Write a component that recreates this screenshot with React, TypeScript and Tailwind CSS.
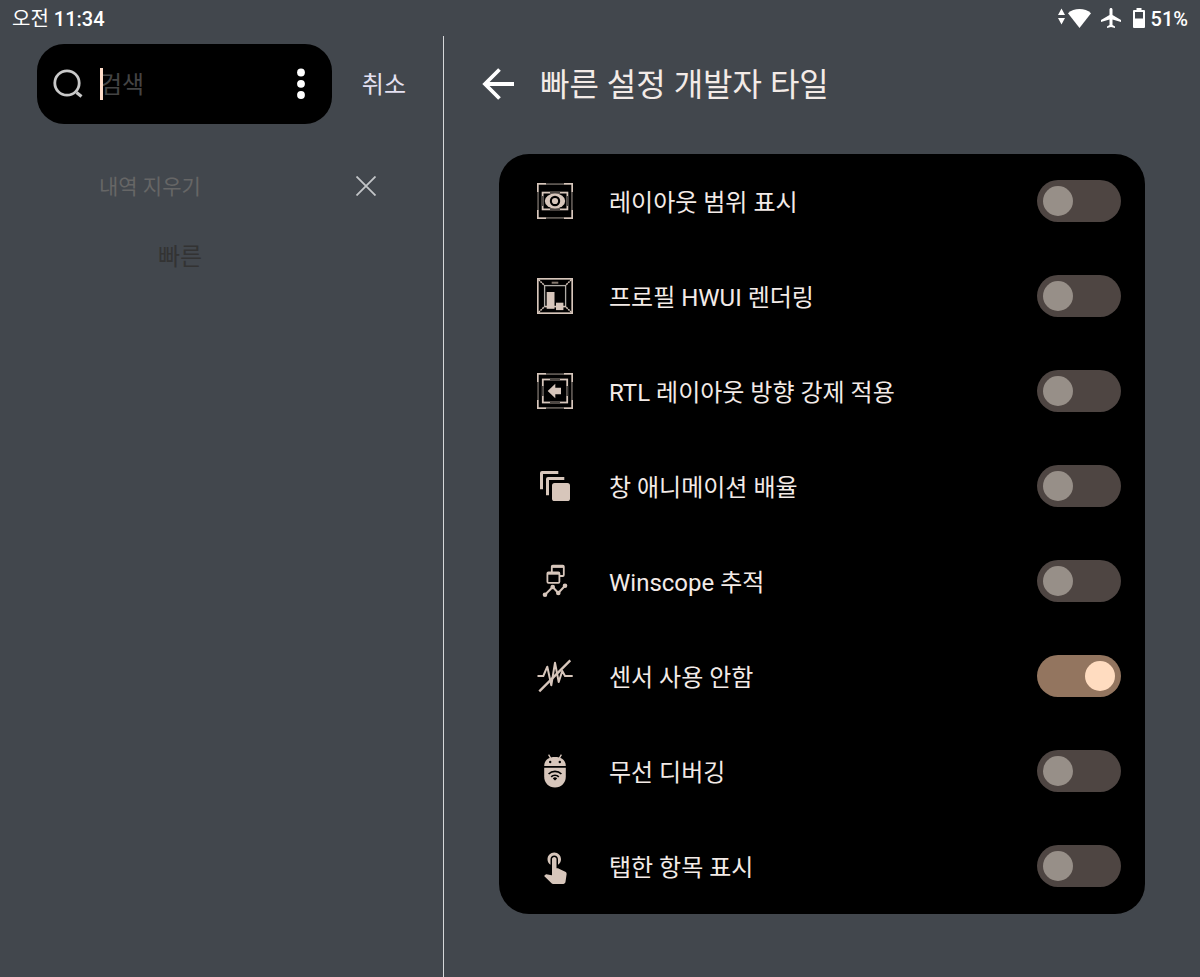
import { useState } from "react"
import type { ReactNode } from "react"

const DIM = "#4a4541"

// Square outline with bright corners and dimmed edge centers
function CornerFrame({ x, y, w, h, gap }: { x: number; y: number; w: number; h: number; gap: number }) {
  const gx = (w - gap) / 2
  const gy = (h - gap) / 2
  return (
    <g fill="none" strokeWidth="1.8">
      <rect x={x} y={y} width={w} height={h} stroke="currentColor" />
      <path
        stroke={DIM}
        strokeWidth="2"
        d={`M${x + gx} ${y}h${gap}M${x + gx} ${y + h}h${gap}M${x} ${y + gy}v${gap}M${x + w} ${y + gy}v${gap}`}
      />
    </g>
  )
}

function Icon({ children, viewBox = "0 0 36 36" }: { children: ReactNode; viewBox?: string }) {
  return (
    <svg viewBox={viewBox} className="size-9 shrink-0 text-[#d7c6bb]" fill="currentColor" aria-hidden="true">
      {children}
    </svg>
  )
}

const tiles = [
  {
    id: "layout-bounds",
    label: "레이아웃 범위 표시",
    on: false,
    icon: (
      <Icon>
        <CornerFrame x={0.8} y={0.8} w={34.4} h={34.4} gap={18} />
        <CornerFrame x={5.6} y={9.6} w={24.8} h={16.8} gap={10} />
        <ellipse cx="18" cy="18" rx="10.2" ry="7.4" />
        <circle cx="18" cy="18" r="5.2" fill="#000" />
        <circle cx="18" cy="18" r="3.1" />
      </Icon>
    ),
  },
  {
    id: "hwui",
    label: "프로필 HWUI 렌더링",
    on: false,
    icon: (
      <Icon>
        <rect x="0.8" y="0.8" width="34.4" height="34.4" fill="none" stroke="currentColor" strokeWidth="1.7" />
        <rect x="7.6" y="7.6" width="21" height="21" fill="none" stroke="#b0aca6" strokeWidth="1.3" />
        <path
          d="M1.5 1.5l6 6M34.5 1.5l-6 6M1.5 34.5l6-6M34.5 34.5l-6-6"
          stroke="currentColor"
          strokeWidth="1.5"
          strokeDasharray="2 0.7"
        />
        <rect x="14.7" y="3.7" width="6.6" height="2" fill="#85796f" />
        <path d="M8 28.5h21" stroke="currentColor" strokeWidth="1.4" />
        <rect x="9.7" y="14" width="7.8" height="16.8" />
        <rect x="19" y="24.7" width="7.4" height="7.4" />
      </Icon>
    ),
  },
  {
    id: "rtl",
    label: "RTL 레이아웃 방향 강제 적용",
    on: false,
    icon: (
      <Icon>
        <CornerFrame x={0.8} y={0.8} w={34.4} h={34.4} gap={18} />
        <CornerFrame x={5.8} y={6.5} w={24.4} h={23} gap={10} />
        <path d="M10.7 18l7.6-7.3v4H24v6.5h-5.7v4.1z" />
      </Icon>
    ),
  },
  {
    id: "window-animation",
    label: "창 애니메이션 배율",
    on: false,
    icon: (
      <Icon>
        <path d="M3 21.3V5a2 2 0 0 1 2-2h16.3v3H6v15.3z" />
        <path d="M9 27.3V11a2 2 0 0 1 2-2h16.3v3H12v15.3z" />
        <rect x="15" y="15" width="18" height="18" rx="2.6" />
      </Icon>
    ),
  },
  {
    id: "winscope",
    label: "Winscope 추적",
    on: false,
    icon: (
      <Icon>
        <g stroke="currentColor" strokeWidth="1.8">
          <rect x="14.8" y="2.6" width="12" height="10.4" rx="1" fill="#000" />
          <path d="M14.8 3.6h12" strokeWidth="2.6" />
          <rect x="10.4" y="9.4" width="12" height="10.4" rx="1" fill="#000" />
          <path d="M10.4 10.4h12" strokeWidth="2.6" />
          <path d="M8 31.7l7.7-7.7 5.6 6 6.700-7.300" fill="none" strokeWidth="2" />
        </g>
        <circle cx="8" cy="31.7" r="2.3" />
        <circle cx="15.7" cy="24" r="2.3" />
        <circle cx="21.3" cy="30" r="2.3" />
        <circle cx="28" cy="22.7" r="2.3" />
      </Icon>
    ),
  },
  {
    id: "sensors-off",
    label: "센서 사용 안함",
    on: true,
    icon: (
      <Icon>
        <g fill="none" stroke="currentColor" strokeLinejoin="round">
          <path d="M0.5 18h5.8l4-9.3 4 18.6L18 4.7l3.7 19.3 3.6-11L28 18h7.7" strokeWidth="2" />
          <path d="M2.3 33.3l31-31" strokeWidth="2.4" />
        </g>
      </Icon>
    ),
  },
  {
    id: "wireless-debugging",
    label: "무선 디버깅",
    on: false,
    icon: (
      <Icon>
        <path d="M7.2 13C7.2 7.4 11.5 4 18 4s10.800 3.400 10.800 9z" />
        <path d="M11.600 1.600l2.200 3.800M24.400 1.600l-2.200 3.800" stroke="currentColor" strokeWidth="1.3" />
        <circle cx="13.2" cy="9" r="1.2" fill="#000" />
        <circle cx="22.8" cy="9" r="1.2" fill="#000" />
        <path d="M7.2 14.8h21.6v9c0 6-4.6 10.800-10.800 10.800S7.200 29.800 7.200 23.800z" />
        <g fill="none" stroke="#000" strokeWidth="1.7">
          <path d="M11.6 21a9 9 0 0 1 12.8 0" />
          <path d="M14.2 23.8a5.4 5.4 0 0 1 7.6 0" />
        </g>
        <path d="M18 27.6l-2.200-2.200a3.100 3.100 0 0 1 4.400 0z" fill="#000" />
      </Icon>
    ),
  },
  {
    id: "show-taps",
    label: "탭한 항목 표시",
    on: false,
    icon: (
      <Icon viewBox="0 0 24 24">
        <path d="M9 11.24V7.5C9 6.12 10.12 5 11.5 5S14 6.12 14 7.5v3.74c1.21-.81 2-2.18 2-3.74C16 5.01 13.99 3 11.5 3S7 5.01 7 7.5c0 1.56.79 2.93 2 3.74zm9.84 4.63l-4.54-2.26c-.17-.07-.35-.11-.54-.11H13v-6c0-.83-.67-1.5-1.5-1.5S10 6.67 10 7.5v10.74c-3.6-.76-3.54-.75-3.67-.75-.31 0-.59.13-.79.33l-.79.8 4.94 4.94c.27.27.65.44 1.06.44h6.79c.75 0 1.33-.55 1.44-1.28l.75-5.27c.01-.07.02-.14.02-.2 0-.62-.38-1.16-.91-1.38z" />
      </Icon>
    ),
  },
]

function StatusBar() {
  return (
    <header className="flex h-9 items-center justify-between px-3 pt-0.5 text-xl font-medium text-white">
      <span>
        <span className="font-normal">오전</span> 11:34
      </span>
      <div className="flex items-center">
        {/* Wi-Fi with activity arrows */}
        <svg width="34" height="20" viewBox="0 0 34 20" className="mb-0.5" fill="currentColor" role="img" aria-label="Wi-Fi">
          <path d="M4.5 0.5L8 7H1zM4.5 16.500L8 10H1z" />
          <path d="M22.5 20L11 5.2C14.2 2.4 18 1 22.5 1S30.8 2.4 34 5.2z" />
        </svg>
        <svg width="20" height="20" viewBox="2 2 20 20" className="mb-0.5 ml-2.5" fill="currentColor" role="img" aria-label="비행기 모드">
          <path d="M22 16v-2l-8.5-5V3.5C13.5 2.67 12.83 2 12 2s-1.5.67-1.5 1.5V9L2 14v2l8.5-2.500V19L8 20.500V22l4-1 4 1v-1.500L13.500 19v-5.500L22 16z" />
        </svg>
        <svg width="12" height="20" viewBox="0 0 12 20" className="mb-0.5 ml-3" fill="currentColor" role="img" aria-label="배터리">
          <path
            fillRule="evenodd"
            d="M3.5 0h5v2H11a1 1 0 0 1 1 1v16a1 1 0 0 1-1 1H1a1 1 0 0 1-1-1V3a1 1 0 0 1 1-1h2.5zM2 4v6.5h8V4z"
          />
        </svg>
        <span className="ml-1.5">51%</span>
      </div>
    </header>
  )
}

function SearchPanel() {
  const [query, setQuery] = useState("")

  return (
    <aside className="w-[37%] shrink-0 border-r border-[#d5d7d9] px-[37px] pt-2">
      <div className="flex items-center gap-[30px]">
        <div className="flex h-20 min-w-0 flex-1 items-center rounded-[27px] bg-black pl-4 pr-[26px]">
          <svg width="32" height="32" viewBox="0 0 32 32" className="shrink-0" fill="none" stroke="#c9c9c9" aria-hidden="true">
            <circle cx="14" cy="15" r="12.2" strokeWidth="2.8" />
            <path d="M23.5 24.5l5 4" strokeWidth="3.2" />
          </svg>
          <div className="relative ml-[15px] flex min-w-0 flex-1 items-center">
            <input
              type="text"
              aria-label="검색"
              placeholder="검색"
              value={query}
              onChange={(e) => setQuery(e.target.value)}
              className="w-full bg-transparent pt-0.5 text-2xl text-white caret-[#ffdcc8] outline-none placeholder:text-[#444444]"
            />
            {query === "" && <span className="absolute left-0 h-8 w-[3px] bg-[#ffdcc8]" />}
          </div>
          <button aria-label="옵션 더보기" className="shrink-0">
            <svg width="10" height="32" viewBox="0 0 10 32" fill="#fff">
              <circle cx="5" cy="4.5" r="3.900" />
              <circle cx="5" cy="15.8" r="3.900" />
              <circle cx="5" cy="27" r="3.900" />
            </svg>
          </button>
        </div>
        <button className="shrink-0 pt-0.5 text-2xl text-[#e4e1f2]">취소</button>
      </div>

      <div className="mt-[46px] flex h-8 items-center justify-between pl-[62px] pr-[30px]">
        <button className="pt-1 text-[21px] text-[#666666]">내역 지우기</button>
        <button aria-label="닫기">
          <svg width="20" height="20" viewBox="0 0 20 20" fill="none" stroke="#c3c6c8" strokeWidth="1.8">
            <path d="M0.5 0.5l19 19M19.5 0.5l-19 19" />
          </svg>
        </button>
      </div>
      <div className="mt-[39px] pl-[121px]">
        <button className="text-2xl text-[#333333]">빠른</button>
      </div>
    </aside>
  )
}

export default function App() {
  const [enabled, setEnabled] = useState<Record<string, boolean>>(
    Object.fromEntries(tiles.map((tile) => [tile.id, tile.on]))
  )

  return (
    <div
      lang="ko"
      className="flex min-h-screen flex-col bg-[#42474d] font-[Roboto,'Noto_Sans_CJK_KR',sans-serif]"
    >
      <StatusBar />
      <div className="flex flex-1">
        <SearchPanel />

        <main className="min-w-0 flex-1 px-[55px] pt-2">
          <div className="-ml-[17px] flex h-20 items-center gap-[26px]">
            <button aria-label="뒤로">
              <svg width="32" height="32" viewBox="0 0 32 32" fill="none" stroke="#fff" strokeWidth="3.800">
                <path d="M17.5 1.5L3 16l14.5 14.5M2.5 16H32" />
              </svg>
            </button>
            <h1 className="pt-0.5 text-[32px] text-[#f3ebe7]">빠른 설정 개발자 타일</h1>
          </div>

          <ul className="mt-[30px] rounded-[30px] bg-black">
            {tiles.map((tile) => (
              <li key={tile.id}>
                <label className="flex h-[95px] items-center pb-0.5 pl-[38px] pr-6">
                  {tile.icon}
                  <span className="ml-9 flex-1 pt-1 text-2xl text-[#f3ebe7]">{tile.label}</span>
                  <input
                    type="checkbox"
                    role="switch"
                    checked={enabled[tile.id]}
                    onChange={(e) => setEnabled({ ...enabled, [tile.id]: e.target.checked })}
                    className="flex h-[42px] w-[84px] appearance-none items-center rounded-full bg-[#4e4542] px-1.5 before:size-[30px] before:rounded-full before:bg-[#978f88] checked:justify-end checked:bg-[#93755f] checked:before:bg-[#ffdcc0]"
                  />
                </label>
              </li>
            ))}
          </ul>
        </main>
      </div>
    </div>
  )
}
